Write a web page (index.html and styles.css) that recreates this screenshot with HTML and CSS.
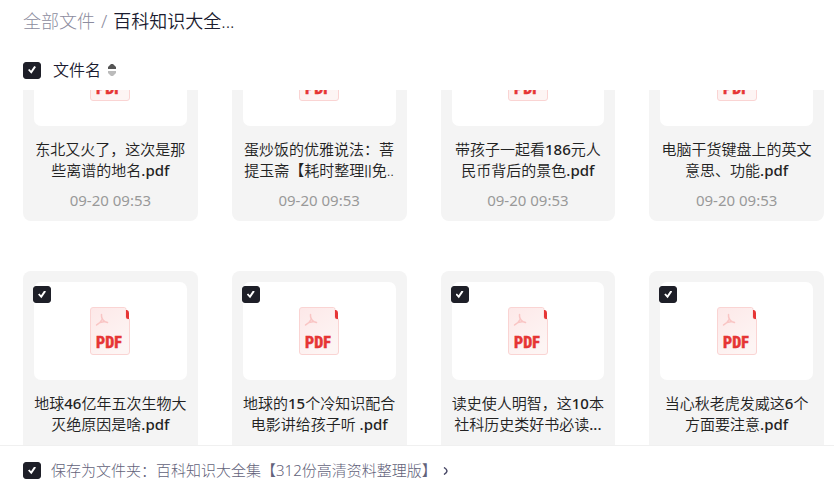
FILE: index.html
```html
<!DOCTYPE html>
<html lang="zh-CN">
  <head>
    <meta charset="UTF-8" />
    <meta name="viewport" content="width=device-width, initial-scale=1.0" />
    <title>百科知识大全集</title>
    <link rel="stylesheet" href="styles.css">
  </head>
  <body>
    <svg class="sprite" width="0" height="0" aria-hidden="true">
      <defs>
        <linearGradient id="paper" x1="0" y1="0" x2="0.6" y2="1">
          <stop offset="0" stop-color="#fde8e8" />
          <stop offset="1" stop-color="#fdf5f4" />
        </linearGradient>
        <symbol id="pdf" viewBox="0 0 40 48">
          <path d="M3 .5H34.500Q36 .5 36 2.500V10Q36 12 38 12H39.500V45Q39.500 47.500 37 47.500H3Q.5 47.500 .5 45V3Q.5 .5 3 .5Z" fill="url(#paper)" stroke="#fad4d3" />
          <path d="M36 3H37Q39 3.500 39 6V12H38Q36 12 36 10Z" fill="#e63535" />
          <path d="M11.500 7.500C11.200 11 12 12.500 14.500 14.500L17.500 15.500M12 12.500C10.800 15 9.500 16.800 6.500 18M10 15.500L15 14.500" fill="none" stroke="#f9c5c4" stroke-width="1.500" stroke-linecap="round" />
          <text class="pdf-text" x="6" y="41">PDF</text>
        </symbol>
      </defs>
    </svg>

    <header class="header">
      <nav class="breadcrumb">
        <a href="#">全部文件</a>
        <span class="slash">/</span>
        <span class="current">百科知识大全...</span>
      </nav>
      <div class="sort">
        <input type="checkbox" class="check" id="checkAll" aria-label="全选" checked />
        <button type="button" class="sort-btn">
          文件名
          <svg width="8" height="14" viewBox="0 0 8 14" aria-hidden="true">
            <path d="M3 1H5L8 4V6H0V4Z" fill="#555" />
            <path d="M3 13H5L8 10V8H0V10Z" fill="#bbb" />
          </svg>
        </button>
      </div>
    </header>

    <main class="files">
      <div class="grid">
        <div class="card">
          <input type="checkbox" class="check" id="f1" checked />
          <div class="thumb"><svg class="icon"><use href="#pdf" /></svg></div>
          <label class="name" for="f1">东北又火了，这次是那<br />些离谱的地名<span class="latin">.pdf</span></label>
          <span class="date">09-20 09:53</span>
        </div>
        <div class="card">
          <input type="checkbox" class="check" id="f2" checked />
          <div class="thumb"><svg class="icon"><use href="#pdf" /></svg></div>
          <label class="name" for="f2">蛋炒饭的优雅说法：菩<br />提玉斋【耗时整理<span class="bars">||</span>免..</label>
          <span class="date">09-20 09:53</span>
        </div>
        <div class="card">
          <input type="checkbox" class="check" id="f3" checked />
          <div class="thumb"><svg class="icon"><use href="#pdf" /></svg></div>
          <label class="name" for="f3">带孩子一起看<span class="latin">186</span>元人<br />民币背后的景色<span class="latin">.pdf</span></label>
          <span class="date">09-20 09:53</span>
        </div>
        <div class="card">
          <input type="checkbox" class="check" id="f4" checked />
          <div class="thumb"><svg class="icon"><use href="#pdf" /></svg></div>
          <label class="name" for="f4">电脑干货键盘上的英文<br />意思、功能<span class="latin">.pdf</span></label>
          <span class="date">09-20 09:53</span>
        </div>
        <div class="card">
          <input type="checkbox" class="check" id="f5" checked />
          <div class="thumb"><svg class="icon"><use href="#pdf" /></svg></div>
          <label class="name" for="f5">地球<span class="latin">46</span>亿年五次生物大<br />灭绝原因是啥<span class="latin">.pdf</span></label>
        </div>
        <div class="card">
          <input type="checkbox" class="check" id="f6" checked />
          <div class="thumb"><svg class="icon"><use href="#pdf" /></svg></div>
          <label class="name" for="f6">地球的<span class="latin">15</span>个冷知识配合<br />电影讲给孩子听 <span class="latin">.pdf</span></label>
        </div>
        <div class="card">
          <input type="checkbox" class="check" id="f7" checked />
          <div class="thumb"><svg class="icon"><use href="#pdf" /></svg></div>
          <label class="name" for="f7">读史使人明智，这<span class="latin">10</span>本<br />社科历史类好书必读<span class="latin">...</span></label>
        </div>
        <div class="card">
          <input type="checkbox" class="check" id="f8" checked />
          <div class="thumb"><svg class="icon"><use href="#pdf" /></svg></div>
          <label class="name" for="f8">当心秋老虎发威这<span class="latin">6</span>个<br />方面要注意<span class="latin">.pdf</span></label>
        </div>
      </div>
    </main>

    <footer class="footer">
      <input type="checkbox" class="check" id="saveFolder" checked />
      <label for="saveFolder">保存为文件夹：百科知识大全集【312份高清资料整理版】</label>
      <svg width="5" height="8" viewBox="0 0 5 8" aria-hidden="true">
        <path d="M1 .5Q4 2.500 4 4T1 7.500" fill="none" stroke="#4a4a68" stroke-width="1.500" />
      </svg>
    </footer>
  </body>
</html>
```

FILE: styles.css
```css
* {
  box-sizing: border-box;
}
body {
  display: flex;
  flex-direction: column;
  height: 100vh;
  margin: 0;
  overflow: hidden;
  background: #fff;
  font-family: "Noto Sans", "Noto Sans CJK SC", sans-serif;
  font-size: 15px;
  font-weight: 300;
  line-height: 21px;
}
.sprite {
  position: absolute;
}
.header {
  padding: 8px 10px 8px 23px;
}
.breadcrumb {
  display: flex;
  gap: 6px;
  font-size: 18px;
  line-height: 26px;
}
.breadcrumb a,
.slash {
  color: #8c8c9e;
  text-decoration: none;
}
.current {
  color: #1b1c30;
  font-weight: 350;
}
.sort {
  display: flex;
  align-items: center;
  gap: 12px;
  margin-top: 24px;
}
.sort-btn {
  display: flex;
  align-items: center;
  gap: 7px;
  padding: 0;
  border: none;
  background: none;
  color: #1b1c30;
  font-family: inherit;
  font-size: 16px;
  font-weight: 350;
  line-height: 24px;
  cursor: pointer;
}
.check {
  appearance: none;
  flex: none;
  display: grid;
  place-items: center;
  width: 18px;
  height: 17px;
  margin: 0;
  border: 1px solid #1e1f28;
  border-radius: 3px;
  background: #fff;
}
.check:checked {
  background: #1e1f28;
}
.check:checked::before {
  content: "";
  width: 8px;
  height: 8px;
  background: #fff;
  clip-path: polygon(0 50%, 18% 36%, 38% 58%, 78% 0, 100% 14%, 42% 96%);
}
.files {
  flex: 1;
  min-height: 0;
  overflow: hidden;
}
/* list is scrolled part of the way through the first row */
.grid {
  display: grid;
  grid-template-columns: repeat(4, 1fr);
  gap: 50px 34px;
  margin-top: -73px;
  padding: 0 10px 0 23px;
}
.card {
  position: relative;
  display: flex;
  flex-direction: column;
  min-width: 0;
  min-height: 204px;
  padding: 11px 11px 9px;
  border-radius: 8px;
  background: #f4f4f4;
  text-align: center;
}
.card .check {
  position: absolute;
  top: 15px;
  left: 10px;
}
.thumb {
  display: flex;
  align-items: center;
  justify-content: center;
  height: 98px;
  border-radius: 7px;
  background: #fff;
}
.icon {
  width: 40px;
  height: 48px;
}
.pdf-text {
  fill: #e63535;
  stroke: #e63535;
  stroke-width: 0.4px;
  font-family: "Roboto Condensed", Roboto, sans-serif;
  font-size: 16px;
  font-weight: 800;
}
.name {
  margin-top: 13px;
  overflow: hidden;
  color: #222;
  font-weight: 350;
  white-space: nowrap;
}
.latin {
  font-weight: 500;
}
.bars {
  font-family: Roboto, sans-serif;
  font-weight: 400;
  line-height: 1;
}
.date {
  margin-top: 9px;
  color: #999;
  font-weight: 400;
}
.footer {
  display: flex;
  align-items: center;
  gap: 6px;
  height: 50px;
  padding: 0 23px;
  border-top: 1px solid #f0f0f0;
  color: #62627a;
}
.footer .check {
  margin-right: 4px;
}
```
